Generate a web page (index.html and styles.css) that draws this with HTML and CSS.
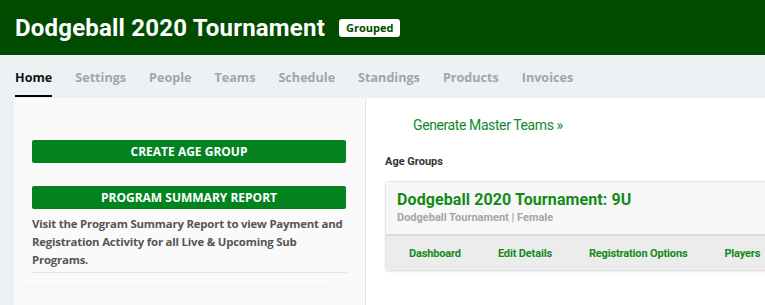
FILE: index.html
```html
<!DOCTYPE html>
<html lang="en-US">
   <head>
      <meta charset="UTF-8"/>
      <title>Dodgeball 2020 Tournament</title>
      <link rel="stylesheet" href="styles.css">
   </head>

   <body>
      <div id="header">
         <h1>Dodgeball 2020 Tournament</h1>
         <span class="badge">Grouped</span>
      </div>

      <div id="tabs">
         <a class="tab active" href="#">Home</a>
         <a class="tab" href="#">Settings</a>
         <a class="tab" href="#">People</a>
         <a class="tab" href="#">Teams</a>
         <a class="tab" href="#">Schedule</a>
         <a class="tab" href="#">Standings</a>
         <a class="tab" href="#">Products</a>
         <a class="tab" href="#">Invoices</a>
      </div>

      <div id="main">
         <div id="sidebar">
            <a class="btn first" href="#">Create Age Group</a>
            <a class="btn" href="#">Program Summary Report</a>
            <p class="note">
               Visit the Program Summary Report to view Payment and
               Registration Activity for all Live &amp; Upcoming Sub
               Programs.
            </p>
            <div class="faint"></div>
         </div>

         <div id="content">
            <a class="generate" href="#">Generate Master Teams &raquo;</a>

            <h4>Age Groups</h4>

            <div class="card">
               <div class="cardTop">
                  <div class="cardTitle">Dodgeball 2020 Tournament: 9U</div>
                  <div class="cardSub">Dodgeball Tournament | Female</div>
               </div>
               <div class="cardLinks">
                  <a href="#">Dashboard</a>
                  <a href="#">Edit Details</a>
                  <a href="#">Registration Options</a>
                  <a href="#">Players</a>
               </div>
            </div>
         </div>
      </div>
   </body>
</html>
```

FILE: styles.css
```css
html, body { margin: 0; padding: 0; }

body {
   background: #eef1f4;
   font-family: "Open Sans", sans-serif;
   overflow: hidden;
}

a { text-decoration: none; }

#header {
   height: 55px;
   background: #004b00;
   display: flex;
   align-items: center;
   padding-left: 15px;
}

#header h1 {
   margin: 0;
   color: #ffffff;
   font-family: Roboto, sans-serif;
   font-weight: 700;
   font-size: 24px;
   letter-spacing: 0.2px;
}

.badge {
   margin-left: 14px;
   background: #ffffff;
   color: #004b00;
   font-weight: 700;
   font-size: 11px;
   padding: 1px 7px;
   border-radius: 3px;
   line-height: 16px;
}

#tabs {
   height: 42px;
   display: flex;
   padding-left: 15px;
}

.tab {
   font-size: 12.6px;
   font-weight: 700;
   color: #a3a5a8;
   margin-right: 23px;
   padding-top: 3px;
   line-height: 39px;
   box-sizing: border-box;
   height: 42px;
}

.tab.active {
   color: #111111;
   border-bottom: 2px solid #000000;
}

#main {
   display: flex;
   padding-left: 14px;
   min-height: 210px;
}

#sidebar {
   width: 315px;
   flex: none;
   background: #fafafa;
   border-right: 1px solid #e2e2e2;
   padding: 42px 18px 0 18px;
   margin-top: 1px;
}

.btn {
   display: block;
   width: 314px;
   height: 23px;
   line-height: 23px;
   background: #02831f;
   color: #ffffff;
   border-radius: 2px;
   text-align: center;
   text-transform: uppercase;
   font-weight: 700;
   font-size: 12px;
   margin-top: 23px;
}

.btn.first { margin-top: 0; }

.note {
   margin: 6px 0 0 0;
   padding-bottom: 3px;
   font-size: 11.4px;
   font-weight: 700;
   letter-spacing: -0.2px;
   line-height: 18px;
   color: #555555;
   border-bottom: 1px solid #e6e6e6;
}

.faint {
   margin: 13px 12px 0 -10px;
   border-top: 1px solid #f3f3f3;
}

#content {
   flex: 1;
   background: #ffffff;
   padding: 17px 0 0 19px;
   margin-top: 1px;
}

.generate {
   display: block;
   margin-left: 28px;
   font-family: Roboto, sans-serif;
   font-size: 14px;
   letter-spacing: -0.4px;
   color: #0d8a2e;
   line-height: 20px;
}

h4 {
   margin: 19px 0 0 0;
   font-family: Roboto, sans-serif;
   font-size: 11px;
   font-weight: 700;
   color: #333333;
   line-height: 16px;
}

.card {
   margin-top: 11px;
   width: 430px;
   border: 1px solid #e4e4e4;
   border-radius: 3px;
   box-shadow: 0 1px 2px rgba(0, 0, 0, 0.08);
   overflow: hidden;
}

.cardTop {
   background: #f7f7f7;
   height: 54px;
   padding: 7px 0 0 11px;
   box-sizing: border-box;
   border-bottom: 2px solid #dcdcdc;
}

.cardTitle {
   font-family: Roboto, sans-serif;
   font-weight: 700;
   font-size: 16px;
   letter-spacing: 0.1px;
   color: #128a18;
   line-height: 22px;
}

.cardSub {
   font-family: Roboto, sans-serif;
   font-weight: 700;
   font-size: 11px;
   color: #a6a6a6;
   line-height: 14px;
}

.cardLinks {
   background: #ececec;
   height: 34px;
   display: flex;
   align-items: center;
   padding-left: 23px;
}

.cardLinks a {
   font-family: Roboto, sans-serif;
   font-weight: 700;
   font-size: 11px;
   letter-spacing: -0.15px;
   color: #138a18;
   margin-right: 37px;
}
```
